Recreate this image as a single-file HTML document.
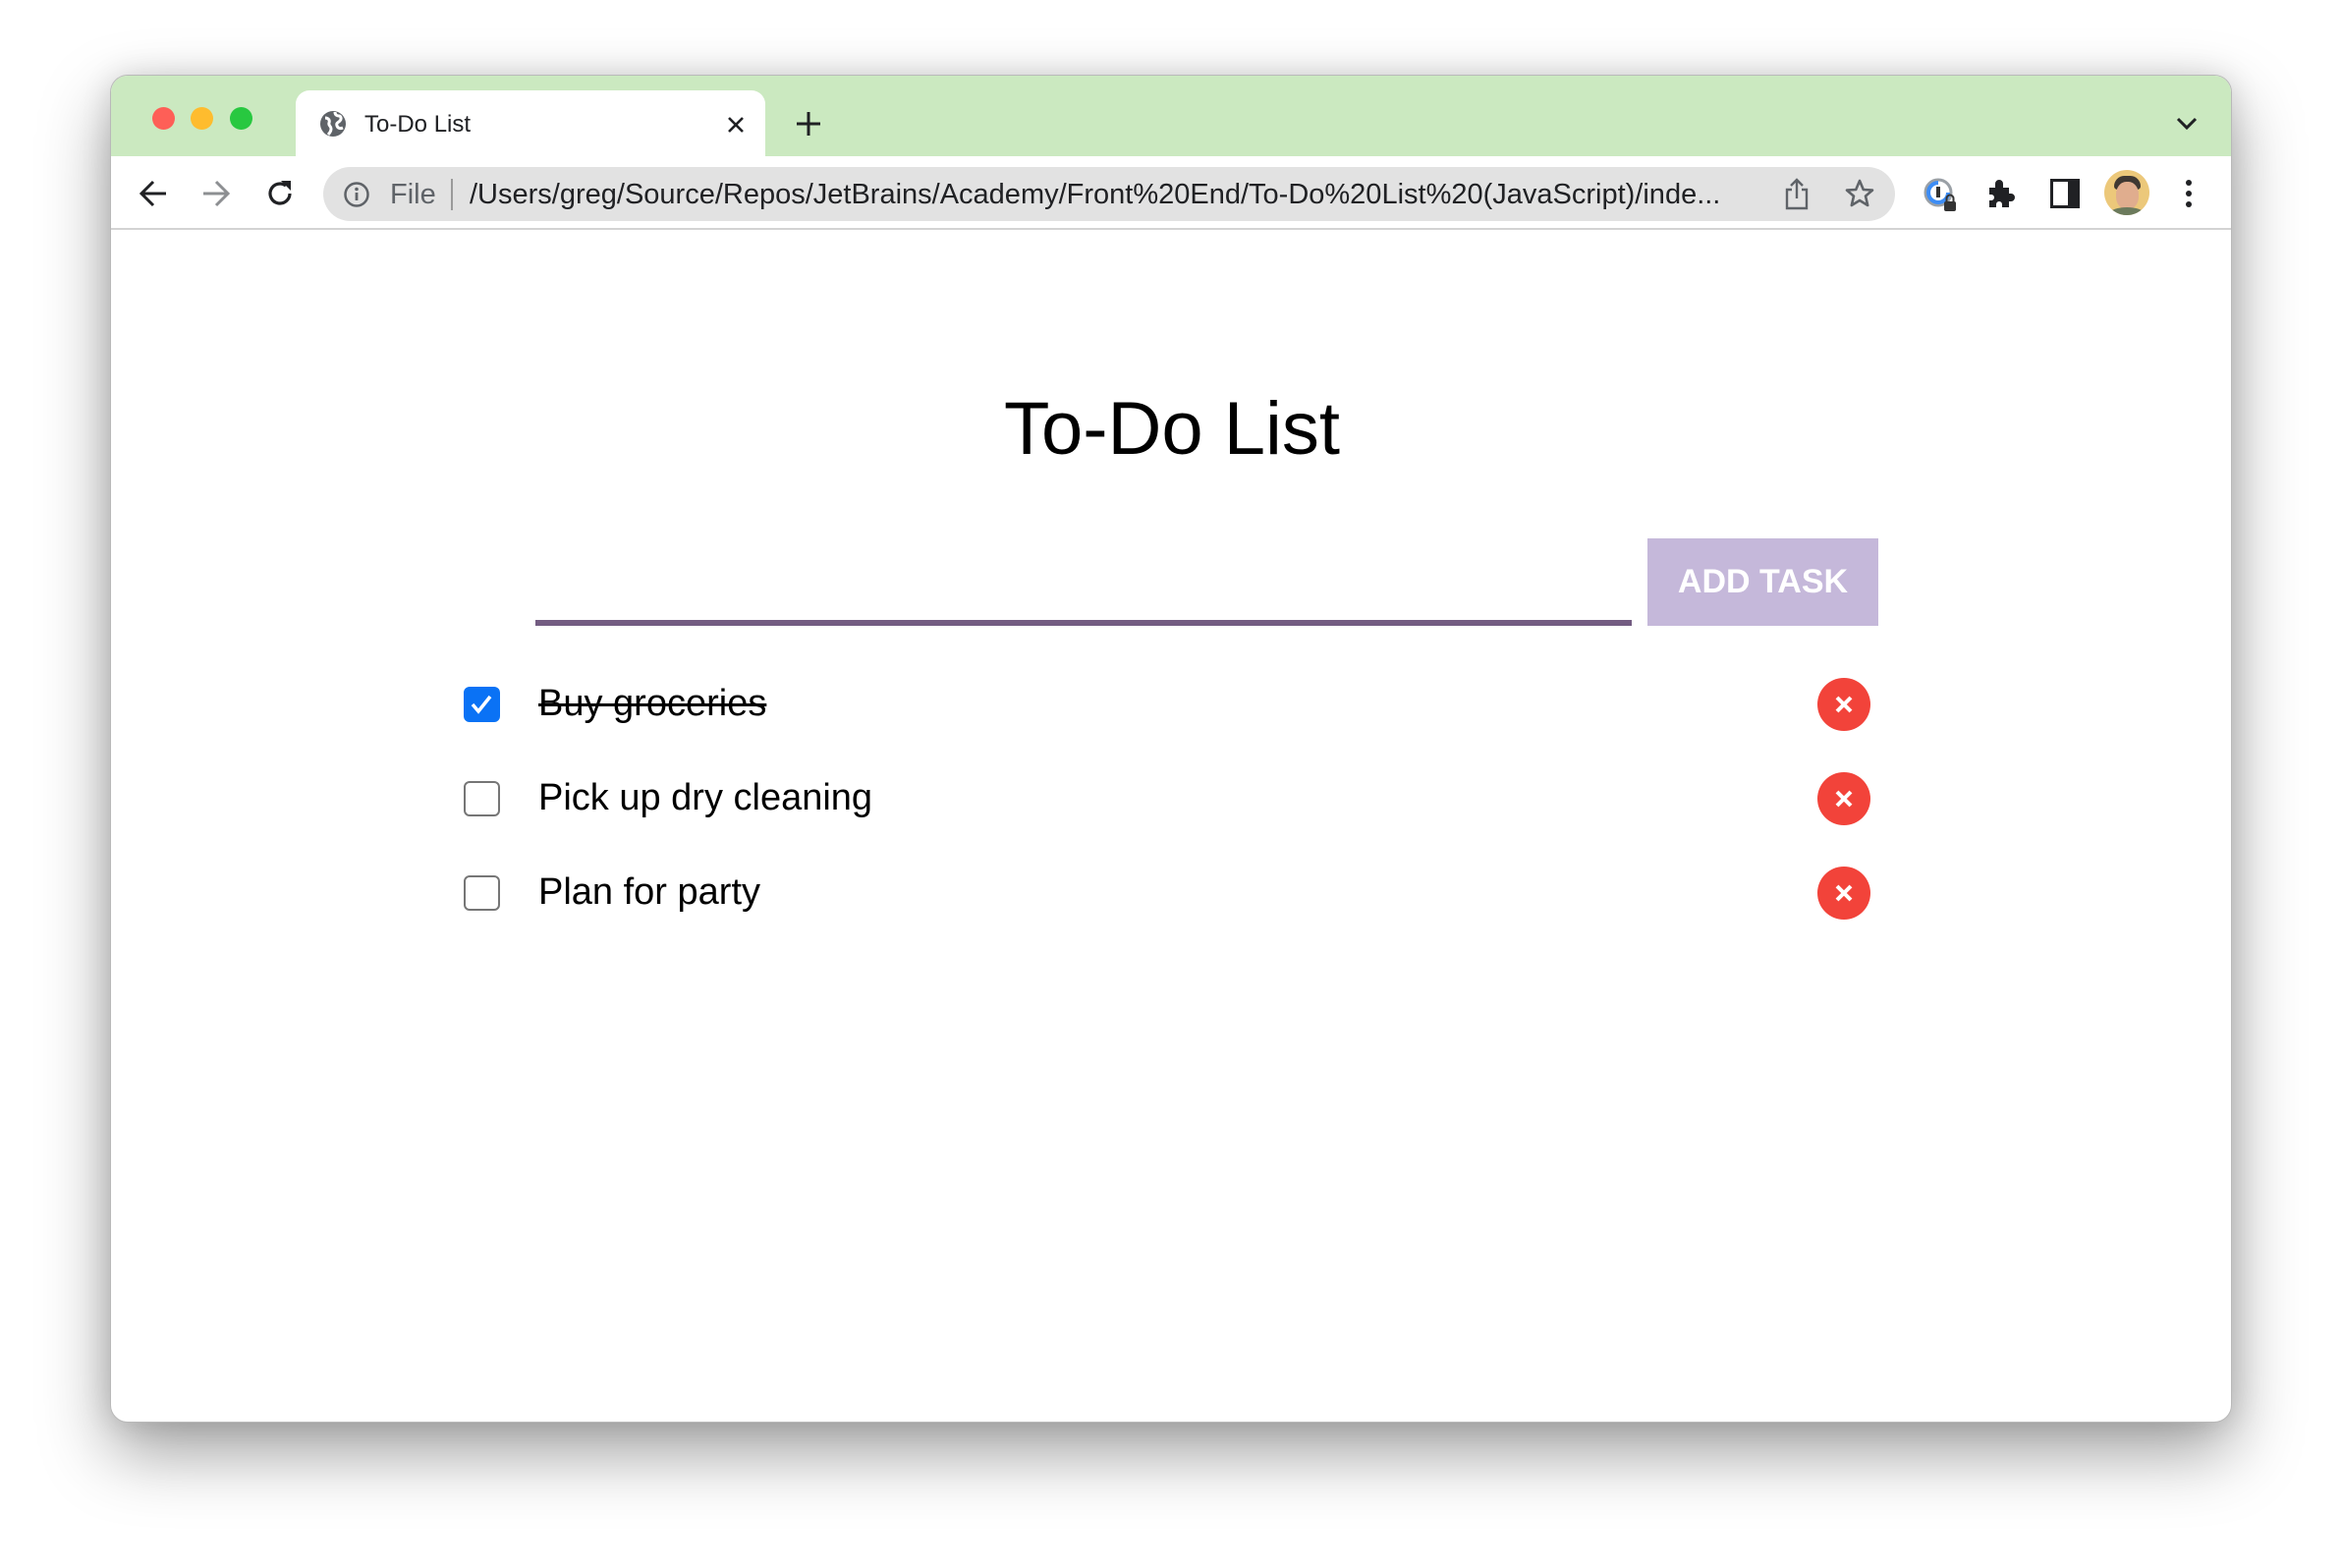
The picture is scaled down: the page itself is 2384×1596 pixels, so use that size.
<!DOCTYPE html>
<html><head><meta charset="utf-8"><style>
*{margin:0;padding:0;box-sizing:border-box}
html,body{width:2384px;height:1596px;background:#fff;overflow:hidden;font-family:"Liberation Sans",Arial,sans-serif}
.win{position:absolute;left:112px;top:76px;width:2160px;height:1372px;border-radius:18px;background:#fff;overflow:hidden;border:1px solid #b9b9b9;box-shadow:0 30px 70px rgba(0,0,0,.38),0 0 30px rgba(0,0,0,.12)}
.strip{position:absolute;left:0;top:0;width:100%;height:82px;background:#cbe9c0}
.dot{position:absolute;top:32px;width:23px;height:23px;border-radius:50%}
.tab{position:absolute;left:188px;top:15px;width:478px;height:70px;background:#fff;border-radius:14px 14px 0 0}
.tt{position:absolute;left:258px;top:36px;font-size:24px;color:#202124}
.toolbar{position:absolute;left:0;top:82px;width:100%;height:75px;background:#fff;border-bottom:2px solid #d3d3d3}
.omni{position:absolute;left:216px;top:11px;width:1600px;height:55px;border-radius:28px;background:#e2e2e2}
.url{position:absolute;left:149px;top:12px;font-size:29px;color:#202124;white-space:nowrap}
.file{position:absolute;left:68px;top:12px;font-size:29px;color:#5f6368}
svg{position:absolute}
h1{position:absolute;left:0;width:2160px;top:316px;text-align:center;font-weight:normal;font-size:76px;color:#000}
.line{position:absolute;left:432px;top:554px;width:1116px;height:6px;background:#735c82}
.btn{position:absolute;left:1564px;top:471px;width:235px;height:89px;background:#c5b8da;color:#fff;font-weight:bold;font-size:34px;text-align:center;line-height:89px}
.cb{position:absolute;left:359px;width:37px;height:36px;border:2.5px solid #767676;border-radius:6px;background:#fff}
.task{position:absolute;left:435px;font-size:38px;color:#000;line-height:40px}
.del{position:absolute;left:1737px;width:54px;height:54px;border-radius:50%;background:#f2433a}
</style></head><body>
<div class="win">
 <div class="strip"></div>
 <div class="dot" style="left:42px;background:#fe5f57"></div>
 <div class="dot" style="left:81px;background:#febc2e"></div>
 <div class="dot" style="left:121px;background:#28c840"></div>
 <div class="tab"></div>
 <svg style="left:212px;top:35px" width="28" height="28" viewBox="0 0 28 28"><circle cx="14" cy="14" r="13" fill="#5f6368"/><path d="M6 8c3 0 5 2 4 5s2 3 2 6-2 5-3 6M16 2c0 3 2 4 4 4s3 3 1 5-4 2-3 5 4 3 6 2" stroke="#fff" stroke-width="3" fill="none"/></svg>
 <div class="tt">To-Do List</div>
 <svg style="left:626px;top:40px" width="20" height="20" viewBox="0 0 20 20"><path d="M3 3L17 17M17 3L3 17" stroke="#202124" stroke-width="2.6"/></svg>
 <svg style="left:697px;top:36px" width="26" height="26" viewBox="0 0 26 26"><path d="M13 1V25M1 13H25" stroke="#202124" stroke-width="3"/></svg>
 <svg style="left:2102px;top:42px" width="22" height="14" viewBox="0 0 22 14"><path d="M2 2L11 11L20 2" stroke="#202124" stroke-width="3" fill="none"/></svg>
 <div class="toolbar">
  <svg style="left:28px;top:23px" width="30" height="30" viewBox="0 0 30 30"><path d="M28 15H4M15 3L3 15L15 27" stroke="#202124" stroke-width="3" fill="none"/></svg>
  <svg style="left:92px;top:23px" width="30" height="30" viewBox="0 0 30 30"><path d="M2 15H26M15 3L27 15L15 27" stroke="#8d8f92" stroke-width="3" fill="none"/></svg>
  <svg style="left:156px;top:22px" width="32" height="32" viewBox="0 0 32 32"><path d="M26 16A10 10 0 1 1 22 8" stroke="#202124" stroke-width="3.2" fill="none"/><path d="M17 3H27V13Z" fill="#202124"/></svg>
  <div class="omni">
   <svg style="left:20px;top:14px" width="28" height="28" viewBox="0 0 28 28"><circle cx="14" cy="14" r="11.5" stroke="#5f6368" stroke-width="2.5" fill="none"/><path d="M14 12V20" stroke="#5f6368" stroke-width="2.8"/><circle cx="14" cy="8.5" r="1.8" fill="#5f6368"/></svg>
   <div class="file">File</div>
   <div style="position:absolute;left:130px;top:12px;width:2px;height:32px;background:#9a9a9a"></div>
   <div class="url">/Users/greg/Source/Repos/JetBrains/Academy/Front%20End/To-Do%20List%20(JavaScript)/inde...</div>
   <svg style="left:1486px;top:10px" width="28" height="34" viewBox="0 0 28 34"><path d="M9 13H4V32H24V13H19M14 22V3M8 9L14 3L20 9" stroke="#5f6368" stroke-width="2.4" fill="none"/></svg>
   <svg style="left:1548px;top:11px" width="32" height="32" viewBox="0 0 32 32"><path d="M16 3L19.8 12 29 12.6 22 18.6 24.2 28 16 23 7.8 28 10 18.6 3 12.6 12.2 12Z" stroke="#5f6368" stroke-width="2.6" fill="none" stroke-linejoin="round"/></svg>
  </div>
  <svg style="left:1844px;top:21px" width="36" height="36" viewBox="0 0 36 36"><circle cx="16" cy="16" r="13" stroke="#9aa0a6" stroke-width="3" fill="none"/><path d="M16 6A10 10 0 1 0 26 16" stroke="#3d8df5" stroke-width="4" fill="none"/><rect x="14" y="10" width="4" height="11" fill="#333"/><rect x="22" y="25" width="12" height="10" rx="2" fill="#333"/><path d="M24.5 25V22a3.5 3.5 0 0 1 7 0v3" stroke="#333" stroke-width="2" fill="none"/></svg>
  <svg style="left:1908px;top:22px" width="32" height="32" viewBox="0 0 32 32"><path d="M4 10H10V6a4 4 0 0 1 8 0v4h6v6h2a4 4 0 0 1 0 8h-2v6H17v-3a3 3 0 0 0-6 0v3H4v-7h2a3 3 0 0 0 0-6H4Z" fill="#202124"/></svg>
  <svg style="left:1974px;top:23px" width="30" height="30" viewBox="0 0 30 30"><rect x="1.5" y="1.5" width="27" height="27" fill="none" stroke="#202124" stroke-width="3"/><rect x="18" y="1" width="11" height="28" fill="#202124"/></svg>
  <div style="position:absolute;left:2029px;top:14px;width:46px;height:46px;border-radius:50%;overflow:hidden;background:#ecc87a">
   <div style="position:absolute;left:10px;top:6px;width:27px;height:14px;border-radius:12px 12px 4px 4px;background:#3f3832"></div>
   <div style="position:absolute;left:12px;top:12px;width:23px;height:28px;border-radius:45%;background:#e0ad8e"></div>
   <div style="position:absolute;left:6px;top:38px;width:34px;height:12px;border-radius:50% 50% 0 0;background:#6b7a5c"></div>
  </div>
  <svg style="left:2108px;top:22px" width="14" height="32" viewBox="0 0 14 32"><circle cx="7" cy="5" r="3" fill="#202124"/><circle cx="7" cy="16" r="3" fill="#202124"/><circle cx="7" cy="27" r="3" fill="#202124"/></svg>
 </div>
 <h1>To-Do List</h1>
 <div class="line"></div>
 <div class="btn">ADD TASK</div>

 <div class="cb" style="top:622px;background:#0a72f5;border-color:#0a72f5"><svg style="left:4px;top:4px" width="24" height="24" viewBox="0 0 24 24"><path d="M3 12L9 19L21 4" stroke="#fff" stroke-width="3.5" fill="none"/></svg></div>
 <div class="task" style="top:619px;text-decoration:line-through;text-decoration-thickness:3px">Buy groceries</div>
 <div class="del" style="top:613px"><svg style="left:17px;top:17px" width="20" height="20" viewBox="0 0 20 20"><path d="M3 3L17 17M17 3L3 17" stroke="#fff" stroke-width="4"/></svg></div>

 <div class="cb" style="top:718px"></div>
 <div class="task" style="top:715px">Pick up dry cleaning</div>
 <div class="del" style="top:709px"><svg style="left:17px;top:17px" width="20" height="20" viewBox="0 0 20 20"><path d="M3 3L17 17M17 3L3 17" stroke="#fff" stroke-width="4"/></svg></div>

 <div class="cb" style="top:814px"></div>
 <div class="task" style="top:811px">Plan for party</div>
 <div class="del" style="top:805px"><svg style="left:17px;top:17px" width="20" height="20" viewBox="0 0 20 20"><path d="M3 3L17 17M17 3L3 17" stroke="#fff" stroke-width="4"/></svg></div>
</div>
</body></html>
